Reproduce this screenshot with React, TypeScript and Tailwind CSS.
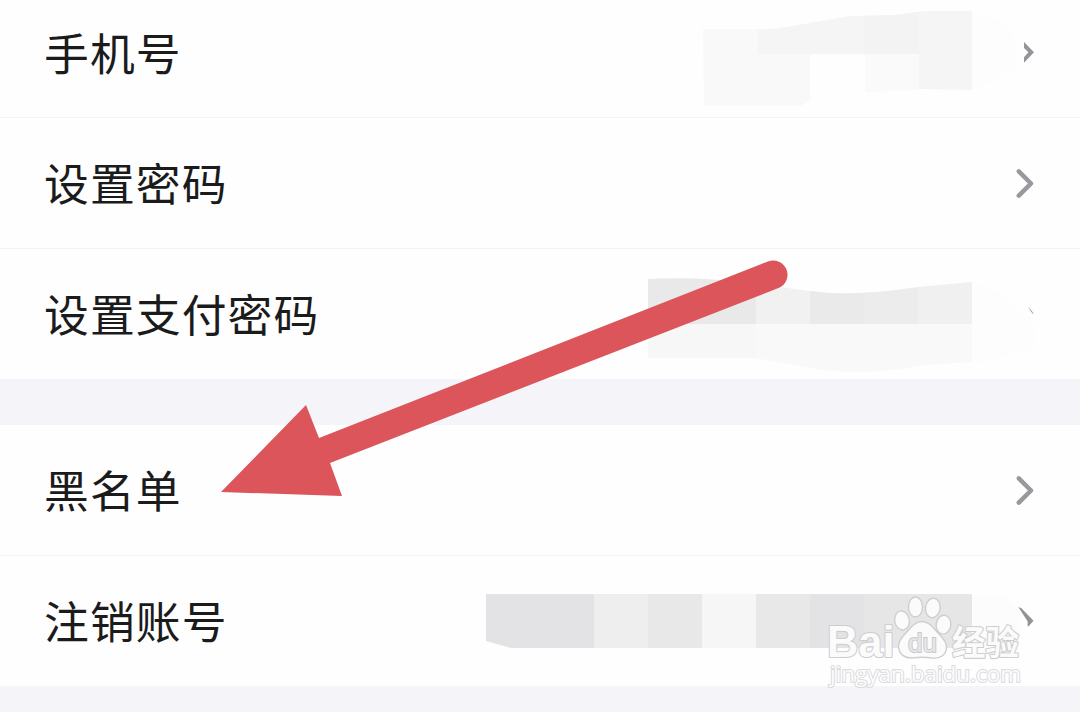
import type { ReactNode } from "react";

const FONT = "font-['Noto_Sans_CJK_SC','Noto_Sans',sans-serif]";

function Chevron({ clip = "full" }: { clip?: "full" | "right" | "trace" | "torn" }) {
  return (
    <svg className="relative h-[36px] w-[24px] shrink-0" viewBox="0 0 24 36" fill="none">
      {clip === "full" && (
        <path d="M6.8 6.3L19 18.5L6.8 30.7" stroke="#98989d" strokeWidth="4.5" strokeLinecap="round" strokeLinejoin="round" />
      )}
      {clip === "right" && <path d="M12 7L22 17.3L12 27.8V22.3L16.4 17.3L12 13Z" fill="#949499" />}
      {clip === "trace" && <path d="M16.3 10.5L21.5 17.2L21 18L18.3 14.8Z" fill="#a5a5a8" />}
      {clip === "torn" && <path d="M6.3 4L9.4 5.2L21.5 17.7L16.4 23.6L15.6 22.8L15.7 18.5Z" fill="#929297" />}
    </svg>
  );
}

function Row({ label, clip, last, height = "h-[131px]", children }: {
  label: string;
  clip?: "full" | "right" | "trace" | "torn";
  last?: boolean;
  height?: string;
  children?: ReactNode;
}) {
  return (
    <div className={`relative flex shrink-0 items-center justify-between bg-[#fefefe] pl-[44px] pr-[44px] ${height} ${last ? "" : "border-b border-[#f3f3f4]"}`}>
      <span className="pb-[2px] text-[44.8px] leading-[60px] tracking-[1.1px] text-[#1b1b1c]">{label}</span>
      {children}
      <Chevron clip={clip} />
    </div>
  );
}

function PhoneMask() {
  return (
    <svg className="absolute left-[690px] top-[12px] h-[115px] w-[340px]" viewBox="690 0 340 115">
      <path d="M972 12L1005 22Q1020 40 1018 60Q1010 78 972 89Z" fill="#fdfdfd" />
      <path d="M703 29H768V54H810V101L800 106H704Z" fill="#f9f9f9" />
      <path d="M758 30L780 28L850 16L895 15L925 11L972 11V90L919 89V54H758Z" fill="#f5f5f5" />
      <path d="M864 16L895 15L919 12V54H864Z" fill="#f3f3f3" />
      <path d="M865 54H919V90L865 92Z" fill="#fafafa" />
    </svg>
  );
}

function PaymentMask() {
  return (
    <svg className="absolute left-[600px] top-0 h-[130px] w-[440px]" viewBox="600 249 440 130">
      <path d="M972 282L1005 295L1034 325V348L972 365Z" fill="#fdfdfd" />
      <path d="M648 323H972V362L925 365Q860 378 805 367L755 358H648Z" fill="#f9f9f9" />
      <path d="M648 323H756V357H648Z" fill="#f7f7f7" />
      <path d="M648 279Q702 276 756 284V324H648Z" fill="#e9e9e9" />
      <path d="M756 284L810 291V324H756Z" fill="#f1f1f1" />
      <path d="M810 291Q852 297 918 287V324H810Z" fill="#ececed" />
      <path d="M810 291Q840 295 864 294V324H810Z" fill="#eaeaeb" />
      <path d="M918 287L972 282V324H918Z" fill="#f0f0f0" />
    </svg>
  );
}

function AccountMask() {
  return (
    <svg className="absolute left-[460px] top-0 h-[120px] w-[580px]" viewBox="460 556 580 120">
      <path d="M972 596L1005 597L1020 612L1018 655L972 650Z" fill="#fcfcfc" />
      <path d="M486 594H595V648H511L486 641Z" fill="#e3e3e5" />
      <path d="M594 594H648V648H594Z" fill="#eeeeef" />
      <path d="M648 594H702V648H648Z" fill="#e8e8e8" />
      <path d="M702 594H756V648H702Z" fill="#f6f6f6" />
      <path d="M756 594H810V648H756Z" fill="#e8e8e8" />
      <path d="M810 594H864V648H810Z" fill="#e3e3e5" />
      <path d="M864 594H972V648H864Z" fill="#e6e6e7" />
    </svg>
  );
}

function Watermark() {
  return (
    <svg className="pointer-events-none absolute left-[820px] top-[588px] h-[105px] w-[215px]" viewBox="820 588 215 105">
      <g fill="#fbfbfb" stroke="#cdcdcf" strokeWidth="2.2" paintOrder="stroke" strokeLinejoin="round">
        <text x="827" y="656.5" textLength="67.5" lengthAdjust="spacingAndGlyphs" className="font-['Liberation_Sans',sans-serif] text-[45px] font-bold">Bai</text>
        <text x="952" y="655" textLength="67" lengthAdjust="spacingAndGlyphs" className="font-['Noto_Sans_CJK_SC',sans-serif] text-[34px] font-bold">经验</text>
      </g>
      <g fill="#fbfbfb" stroke="#cfcfd1" strokeWidth="1.4">
        <ellipse cx="915.5" cy="607" rx="7" ry="10" />
        <ellipse cx="932.8" cy="608" rx="7.3" ry="9.8" transform="rotate(8 932.8 608)" />
        <ellipse cx="902" cy="620.5" rx="7.3" ry="9.5" transform="rotate(-10 902 620.5)" />
        <ellipse cx="943.5" cy="624.7" rx="7.3" ry="9.5" transform="rotate(8 943.5 624.7)" />
        <path d="M922 621.5C914 621.5 910 629 905 634C900 639 898 643 898.5 648C900 656 905 658 912 658Q922 656.5 932 658C940 659 946 655 946.5 648C947 643 944 639 939 634C934 629 930 621.5 922 621.5Z" />
      </g>
      <text x="908" y="652" textLength="29" lengthAdjust="spacingAndGlyphs" fill="#e6e6e7" stroke="#c8c8ca" strokeWidth="1.8" paintOrder="stroke" className="font-['Liberation_Sans',sans-serif] text-[26px]">du</text>
      <text x="830" y="682" textLength="191" lengthAdjust="spacingAndGlyphs" fill="#fcfcfd" stroke="#dbdbdd" strokeWidth="2" paintOrder="stroke" className="font-['Open_Sans','Liberation_Sans',sans-serif] text-[22px]">jingyan.baidu.com</text>
    </svg>
  );
}

export default function App() {
  return (
    <main className={`relative h-[712px] w-full overflow-hidden bg-[#f4f4f9] ${FONT}`}>
      <div className="-mt-[12px] flex flex-col">
        <Row label="手机号" clip="right" height="h-[130px]"><PhoneMask /></Row>
        <Row label="设置密码" />
        <Row label="设置支付密码" clip="trace" last height="h-[130px]"><PaymentMask /></Row>
        <div className="h-[46px] shrink-0" />
        <Row label="黑名单" />
        <Row label="注销账号" clip="torn" last height="h-[130px]"><AccountMask /></Row>
      </div>
      <svg className="pointer-events-none absolute left-[210px] top-[250px] h-[260px] w-[590px]" viewBox="210 250 590 260">
        <path d="M221 492L306 405L319 438L768 261.5A14 14 0 0 1 778.5 288L330 463L342 496Z" fill="#db555b" />
      </svg>
      <Watermark />
    </main>
  );
}
